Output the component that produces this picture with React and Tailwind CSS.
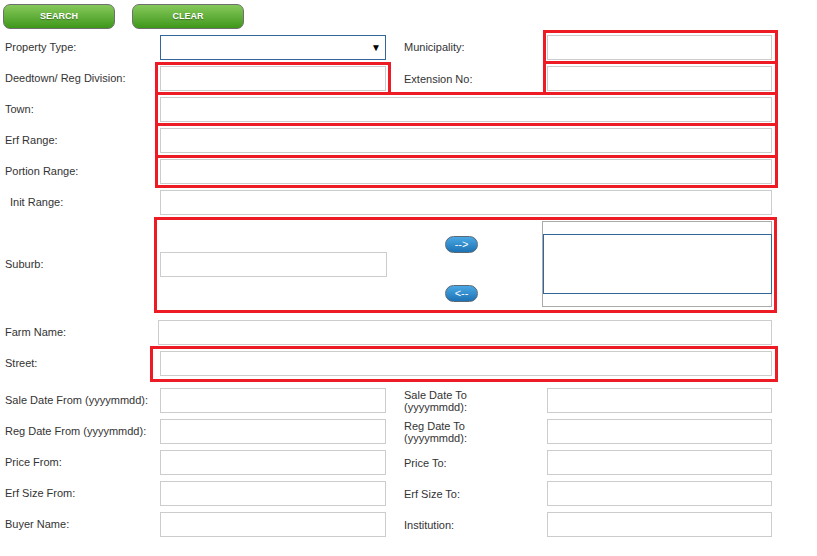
import React from 'react';

function Label({ children, className = 'w-[160px] pl-[5px]' }) {
  return <div className={`shrink-0 ${className}`}>{children}</div>;
}

function Input({ className = 'w-[226px]' }) {
  return <input type="text" className={`h-[25px] border border-[#cccccc] bg-white outline-none ${className}`} />;
}

function Row({ children, className = 'mb-[6px]' }) {
  return <div className={`flex h-[25px] items-center ${className}`}>{children}</div>;
}

function PairRow({ left, right, className }) {
  return (
    <Row className={className}>
      <Label>{left}</Label>
      <Input />
      <div className="ml-[18px] w-[143px] shrink-0 leading-[12px]">{right}</div>
      <Input className="w-[225px]" />
    </Row>
  );
}

function FullRow({ label, className, inputClass = 'w-[612px]', labelClass }) {
  return (
    <Row className={className}>
      <Label className={labelClass}>{label}</Label>
      <Input className={inputClass} />
    </Row>
  );
}

function GreenButton({ children }) {
  return (
    <button className="h-[25px] w-[112px] rounded-[7px] border border-[#6f6f6f] bg-gradient-to-b from-[#86c95a] to-[#3d9817] pt-[1px] text-[9px] font-bold text-white [text-shadow:0_1px_1px_rgba(0,0,0,0.35)]">
      {children}
    </button>
  );
}

function BlueButton({ children }) {
  return (
    <button className="h-[17px] w-[33px] rounded-full border border-[#5b6875] bg-gradient-to-b from-[#4aa8e4] to-[#1c73b5] text-[11px] leading-none text-white">
      {children}
    </button>
  );
}

const marks = [
  'left-[543px] top-[30px] w-[235px] h-[34px]',
  'left-[155px] top-[62px] w-[236px] h-[33px]',
  'left-[543px] top-[61px] w-[235px] h-[34px]',
  'left-[155px] top-[92px] w-[623px] h-[34px]',
  'left-[155px] top-[123px] w-[623px] h-[35px]',
  'left-[155px] top-[155px] w-[623px] h-[33px]',
  'left-[154px] top-[217px] w-[623px] h-[96px]',
  'left-[150px] top-[346px] w-[628px] h-[36px]',
];

export default function App() {
  return (
    <div className="relative h-[556px] w-[817px] overflow-hidden bg-white font-['Liberation_Sans',Arial,sans-serif] text-[11px] text-[#333333]">
      <div className="flex gap-[17px] pl-[3px] pt-[4px] pb-[6px]">
        <GreenButton>SEARCH</GreenButton>
        <GreenButton>CLEAR</GreenButton>
      </div>

      <Row>
        <Label>Property Type:</Label>
        <div className="flex h-[25px] w-[226px] items-center justify-end border border-[#336699] pr-[4px] text-[10px] text-black">▼</div>
        <div className="ml-[18px] w-[143px] shrink-0">Municipality:</div>
        <Input className="w-[225px]" />
      </Row>
      <PairRow left="Deedtown/ Reg Division:" right="Extension No:" />
      <FullRow label="Town:" />
      <FullRow label="Erf Range:" />
      <FullRow label="Portion Range:" />
      <FullRow label="Init Range:" labelClass="w-[160px] pl-[10px]" />

      <div className="flex h-[86px] items-center mb-[13px]">
        <Label>Suburb:</Label>
        <Input className="w-[227px]" />
        <div className="ml-[58px] flex w-[97px] shrink-0 flex-col gap-[32px] self-stretch pt-[15px]">
          <BlueButton>--&gt;</BlueButton>
          <BlueButton>&lt;--</BlueButton>
        </div>
        <div className="h-[86px] w-[230px] border border-[#aaaaaa] pt-[12px]">
          <div className="h-[60px] w-[229px] border border-[#336699]" />
        </div>
      </div>

      <FullRow label="Farm Name:" labelClass="w-[158px] pl-[5px]" inputClass="w-[614px]" />
      <FullRow label="Street:" className="mb-[12px]" />
      <PairRow left="Sale Date From (yyyymmdd):" right={<>Sale Date To<br />(yyyymmdd):</>} />
      <PairRow left="Reg Date From (yyyymmdd):" right={<>Reg Date To<br />(yyyymmdd):</>} />
      <PairRow left="Price From:" right="Price To:" />
      <PairRow left="Erf Size From:" right="Erf Size To:" />
      <PairRow left="Buyer Name:" right="Institution:" />

      {marks.map((m) => (
        <div key={m} className={`pointer-events-none absolute border-[3px] border-[#ed1c24] ${m}`} />
      ))}
    </div>
  );
}
